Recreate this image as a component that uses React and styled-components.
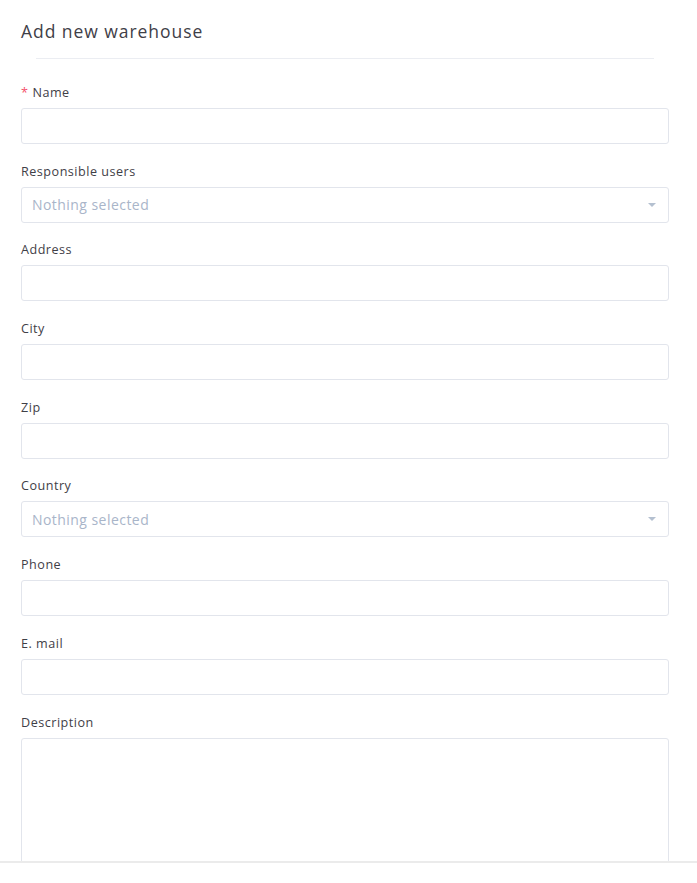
import React from "react";
import styled, { createGlobalStyle } from "styled-components";

const Global = createGlobalStyle`
  html, body { margin: 0; padding: 0; background: #fff; }
  body { font-family: "Open Sans", "Noto Sans", sans-serif; color: #3f4047; }
  * { box-sizing: border-box; }
`;

const Page = styled.div`
  height: 100vh;
  display: flex;
  flex-direction: column;
  background: #fff;
`;

const Body = styled.div`
  flex: 1;
  overflow: hidden;
  padding: 19px 28px 0 21px;
`;

const Title = styled.h3`
  margin: 0;
  font-size: 17.5px;
  line-height: 24px;
  font-weight: 400;
  color: #3f4047;
  letter-spacing: 0.95px;
`;

const Divider = styled.div`
  height: 1px;
  background: #ebedf2;
  margin: 15px 15px 22px 15px;
`;

const Form = styled.form`
  display: flex;
  flex-direction: column;
  gap: 15.7px;
`;

const Field = styled.div`
  display: flex;
  flex-direction: column;
`;

const Label = styled.label`
  font-size: 12.6px;
  line-height: 20px;
  padding-top: 2px;
  margin-bottom: 5px;
  color: #3f4047;
  letter-spacing: 0.5px;
`;

const Req = styled.span`
  color: #f4516c;
  margin-right: 4px;
`;

const Input = styled.input`
  height: 36px;
  width: 100%;
  border: 1px solid #e2e5ec;
  border-radius: 3px;
  background: #fff;
  font: inherit;
  outline: none;
`;

const SelectBox = styled.div`
  height: 36px;
  border: 1px solid #e2e5ec;
  border-radius: 3px;
  display: flex;
  align-items: center;
  justify-content: space-between;
  padding: 0 12px 0 10px;
  font-size: 14px;
  color: #a9b5c9;
  letter-spacing: 0.45px;
`;

const Caret = styled.span`
  width: 0;
  height: 0;
  border-left: 4.5px solid transparent;
  border-right: 4.5px solid transparent;
  border-top: 4px solid #b4c0d0;
`;

const TextArea = styled.textarea`
  width: 100%;
  height: 160px;
  border: 1px solid #e2e5ec;
  border-radius: 3px;
  resize: none;
  font: inherit;
  outline: none;
  display: block;
`;

const Footer = styled.div`
  height: 22px;
  border-top: 2px solid #ebebeb;
  background: #fff;
  flex-shrink: 0;
`;

const Select = () => (
  <SelectBox>
    <span>Nothing selected</span>
    <Caret />
  </SelectBox>
);

export default function App() {
  return (
    <Page>
      <Global />
      <Body>
        <Title>Add new warehouse</Title>
        <Divider />
        <Form>
          <Field>
            <Label><Req>*</Req>Name</Label>
            <Input />
          </Field>
          <Field>
            <Label>Responsible users</Label>
            <Select />
          </Field>
          <Field>
            <Label>Address</Label>
            <Input />
          </Field>
          <Field>
            <Label>City</Label>
            <Input />
          </Field>
          <Field>
            <Label>Zip</Label>
            <Input />
          </Field>
          <Field>
            <Label>Country</Label>
            <Select />
          </Field>
          <Field>
            <Label>Phone</Label>
            <Input />
          </Field>
          <Field>
            <Label>E. mail</Label>
            <Input />
          </Field>
          <Field>
            <Label>Description</Label>
            <TextArea />
          </Field>
        </Form>
      </Body>
      <Footer />
    </Page>
  );
}
